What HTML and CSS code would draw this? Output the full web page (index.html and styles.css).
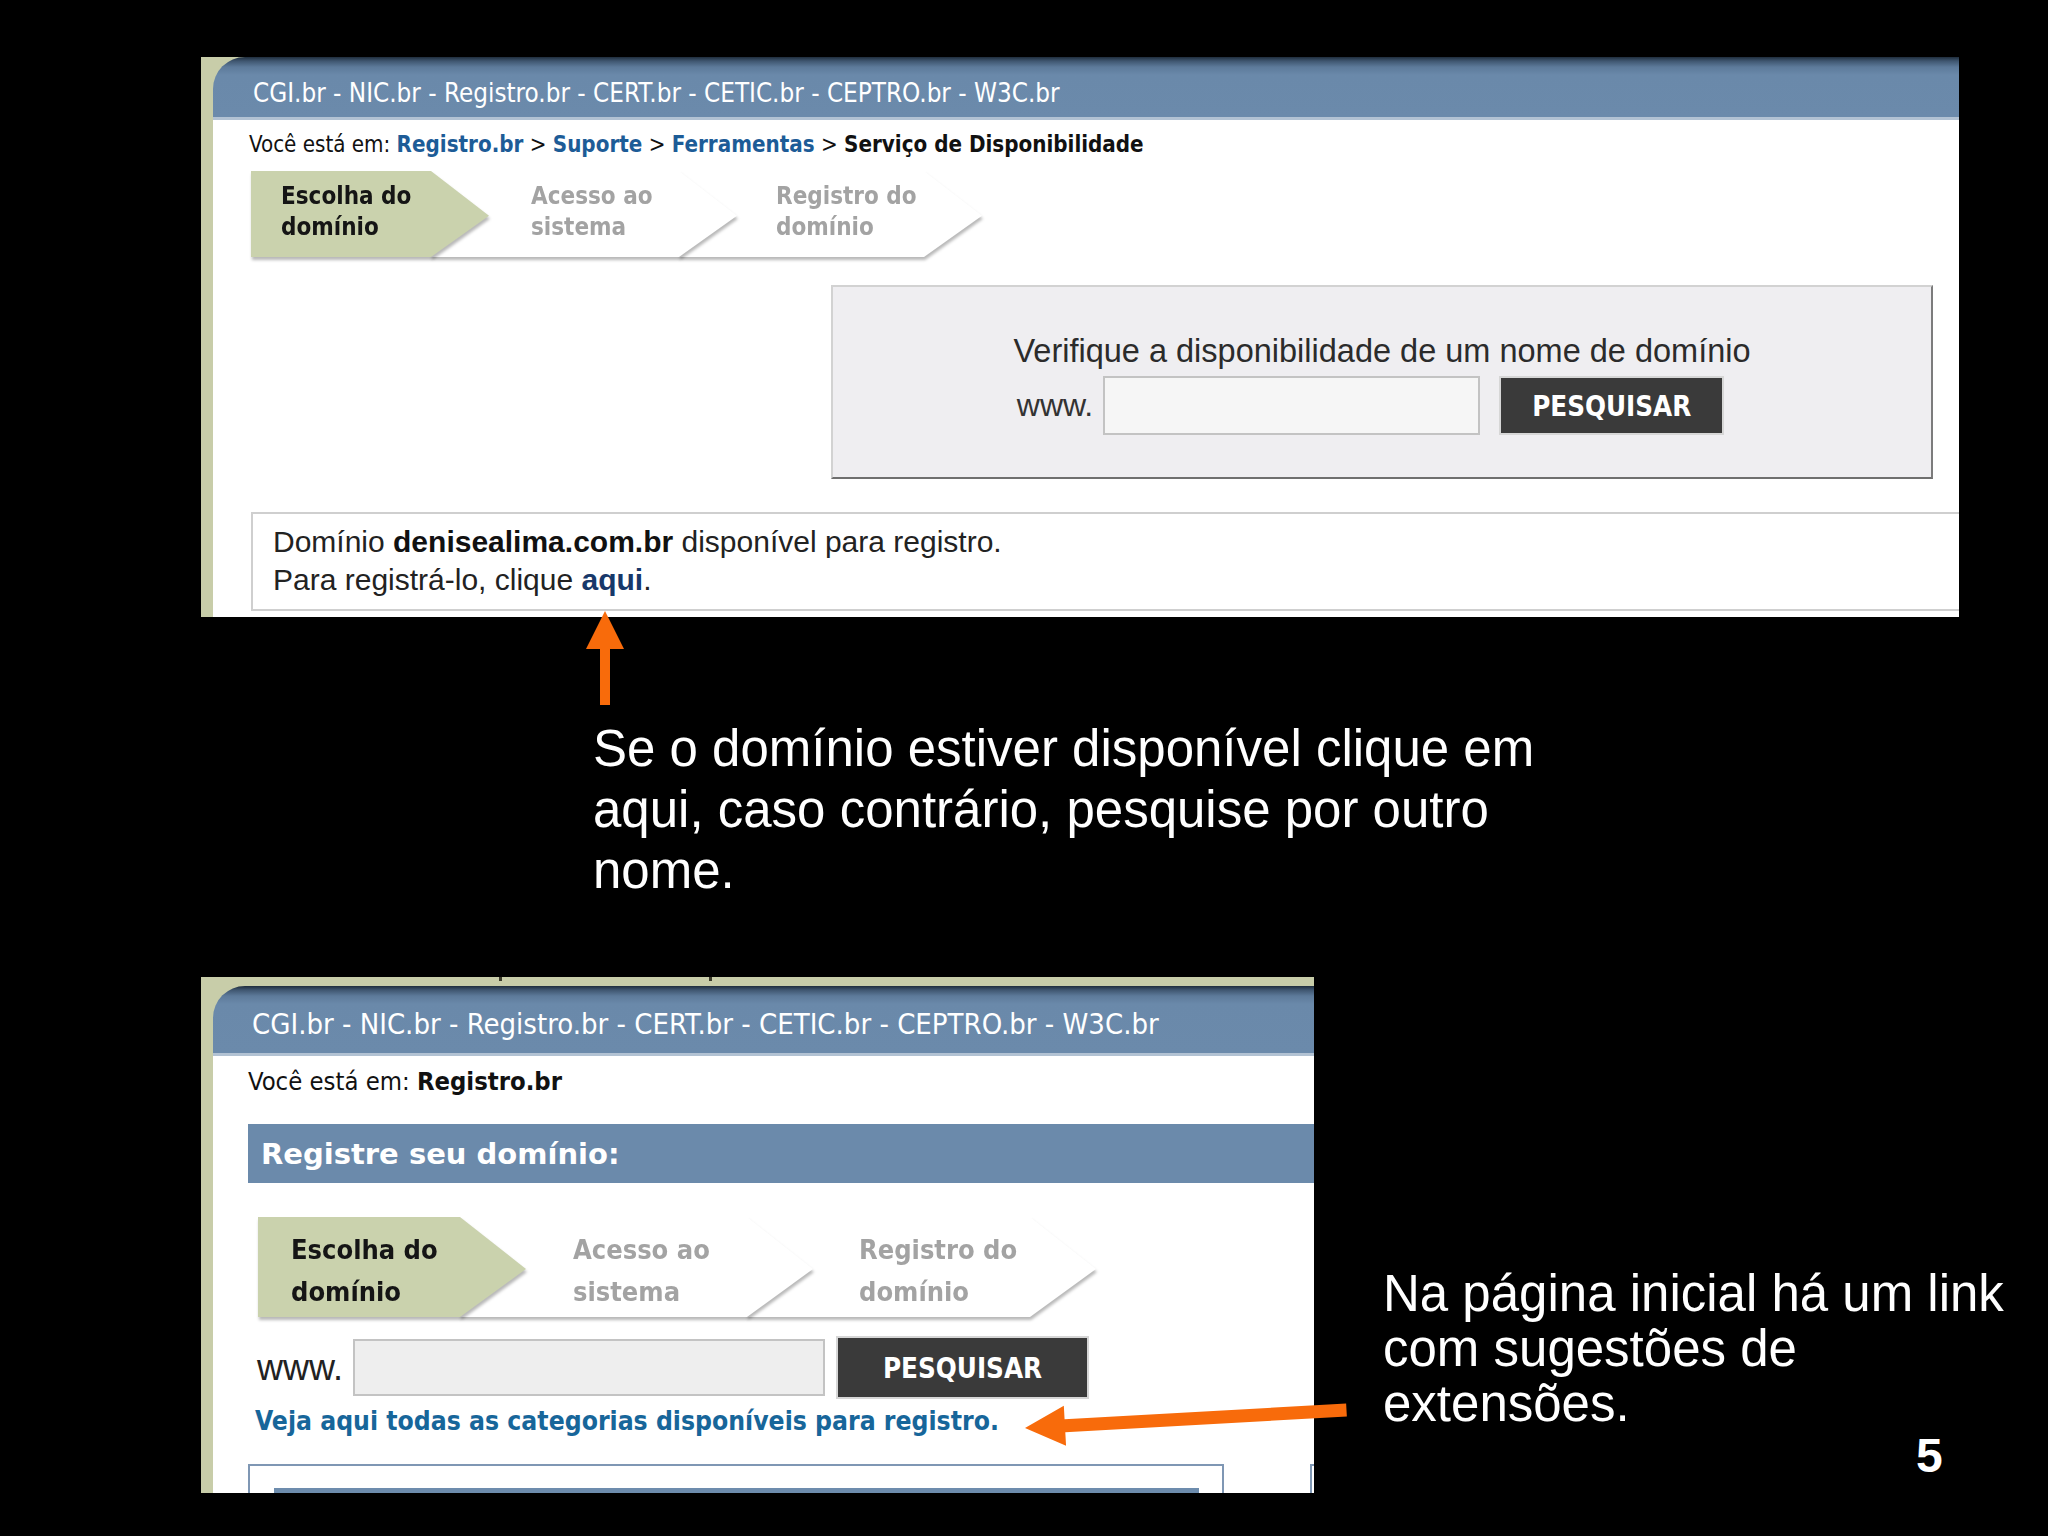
FILE: index.html
```html
<!DOCTYPE html>
<html lang="pt-BR">
<head>
<meta charset="utf-8">
<title>Registro.br - Serviço de Disponibilidade</title>
<link rel="stylesheet" href="styles.css">
</head>
<body>
<div class="slide">

  <div class="shot shot-top">
    <div class="main">
      <div class="topbar">CGI.br - NIC.br - Registro.br - CERT.br - CETIC.br - CEPTRO.br - W3C.br</div>
      <div class="page">
        <div class="crumbs">Você está em: <a class="crumb-link">Registro.br</a> &gt; <a class="crumb-link">Suporte</a> &gt; <a class="crumb-link">Ferramentas</a> &gt; <b class="crumb-here">Serviço de Disponibilidade</b></div>
        <div class="steps">
          <div class="step step-1 on"><div class="step-shape">Escolha do<br>domínio</div></div>
          <div class="step step-2"><div class="step-shape">Acesso ao<br>sistema</div></div>
          <div class="step step-3"><div class="step-shape">Registro do<br>domínio</div></div>
        </div>
        <div class="check">
          <div class="check-title">Verifique a disponibilidade de um nome de domínio</div>
          <div class="check-row">
            <span class="www">www.</span>
            <div class="input"></div>
            <div class="btn">PESQUISAR</div>
          </div>
        </div>
        <div class="result">
          Domínio <b class="strong">denisealima.com.br</b> disponível para registro.<br>
          Para registrá-lo, clique <a class="aqui">aqui</a>.
        </div>
      </div>
    </div>
  </div>

  <svg class="arrow arrow-up" width="40" height="96" viewBox="0 0 40 96" aria-hidden="true">
    <polygon points="20,2 39,40 25,40 25,96 15,96 15,40 1,40" fill="#f86b0b"/>
  </svg>

  <div class="caption cap1">Se o domínio estiver disponível clique em<br>aqui, caso contrário, pesquise por outro<br>nome.</div>

  <div class="shot shot-bottom">
    <div class="ticks"><span class="tick"></span><span class="tick"></span></div>
    <div class="main">
      <div class="topbar">CGI.br - NIC.br - Registro.br - CERT.br - CETIC.br - CEPTRO.br - W3C.br</div>
      <div class="page">
        <div class="crumbs">Você está em: <b class="crumb-here">Registro.br</b></div>
        <div class="regbar">Registre seu domínio:</div>
        <div class="steps">
          <div class="step step-1 on"><div class="step-shape">Escolha do<br>domínio</div></div>
          <div class="step step-2"><div class="step-shape">Acesso ao<br>sistema</div></div>
          <div class="step step-3"><div class="step-shape">Registro do<br>domínio</div></div>
        </div>
        <div class="search">
          <span class="www">www.</span>
          <div class="input"></div>
          <div class="btn">PESQUISAR</div>
        </div>
        <a class="cat-link">Veja aqui todas as categorias disponíveis para registro.</a>
        <div class="boxes">
          <div class="box1"><div class="box1-bar"></div></div>
          <div class="box2"></div>
        </div>
      </div>
    </div>
  </div>

  <svg class="arrow arrow-left" width="340" height="60" viewBox="0 0 340 60" aria-hidden="true">
    <g transform="translate(5,38) rotate(-3.2)">
      <polygon points="0,0 40,-20 40,-6.5 322,-6.5 322,6.5 40,6.5 40,20" fill="#f86b0b"/>
    </g>
  </svg>

  <div class="caption cap2">Na página inicial há um link<br>com sugestões de<br>extensões.</div>

  <div class="pagenum">5</div>
</div>
</body>
</html>
```

FILE: styles.css
```css
* { box-sizing: border-box; }

html, body {
  margin: 0;
  padding: 0;
  background: #000;
}

body {
  font-family: "Liberation Sans", Arial, sans-serif;
}

.slide {
  position: relative;
  width: 2048px;
  height: 1536px;
  overflow: hidden;
  background: #000;
}

/* ---------- screenshot panels ---------- */
.shot {
  position: absolute;
  display: flex;
  background: #c8cda9;
  padding-left: 12px;
  overflow: hidden;
  font-family: "Liberation Sans Narrow", "Arial Narrow", "DejaVu Sans Condensed", "Nimbus Sans Narrow", sans-serif;
}

.shot-top {
  left: 201px;
  top: 57px;
  width: 1758px;
  height: 560px;
}

.shot-bottom {
  left: 201px;
  top: 977px;
  width: 1113px;
  height: 516px;
  padding-top: 9px;
}

/* tiny marks on the cropped top edge of the lower screenshot */
.ticks {
  position: absolute;
  left: 0;
  top: 0;
  width: 100%;
  height: 9px;
}

.tick {
  position: absolute;
  top: 0;
  width: 3px;
  height: 4px;
  background: #3a3a2a;
}

.tick:nth-child(1) { left: 298px; }
.tick:nth-child(2) { left: 508px; }

.main {
  flex: 1;
  min-width: 0;
  display: flex;
  flex-direction: column;
}

.topbar {
  flex: none;
  display: flex;
  align-items: center;
  white-space: nowrap;
  color: #fff;
  border-top-left-radius: 32px;
  border-bottom: 3px solid #b2c2d3;
  background: linear-gradient(to bottom, #1f2d3c 0, #3f5670 4px, #5d7a9a 10px, #6a89aa 18px, #6b8aab 100%);
}

.shot-top .topbar {
  height: 63px;
  padding: 12px 0 0 40px;
  font-size: 25.8px;
}

.shot-bottom .topbar {
  height: 70px;
  padding: 9px 0 0 39px;
  font-size: 29px;
}

.page {
  flex: 1;
  min-height: 0;
  background: #fff;
  display: flex;
  flex-direction: column;
  align-items: flex-start;
  overflow: hidden;
}

.shot-top .page { padding-left: 36px; }
.shot-bottom .page { padding-left: 35px; }

/* breadcrumb */
.crumbs {
  margin-top: 10px;
  color: #111;
  white-space: nowrap;
}

.shot-top .crumbs { font-size: 22.2px; line-height: 28px; }
.shot-bottom .crumbs { font-size: 25.4px; line-height: 31px; }

.crumb-link {
  color: #1d5c97;
  font-weight: bold;
}

.crumb-here {
  color: #111;
  font-weight: bold;
}

/* steps */
.steps {
  display: flex;
  flex: none;
}

.shot-top .steps {
  --tip: 58px;
  margin-top: 13px;
  margin-left: 2px;
  height: 86px;
  font-size: 24px;
  line-height: 31px;
}

.shot-bottom .steps {
  --tip: 66px;
  margin-top: 34px;
  margin-left: 10px;
  height: 100px;
  font-size: 27px;
  line-height: 42px;
}

.step {
  flex: none;
  height: 100%;
  filter: drop-shadow(1px 3px 1.5px rgba(0, 0, 0, 0.28));
}

.step + .step { margin-left: calc(-1 * var(--tip)); }

.step-1 { z-index: 3; }
.step-2 { z-index: 2; }
.step-3 { z-index: 1; }

.step-shape {
  height: 100%;
  background: #fff;
  color: #a3a3a3;
  font-weight: bold;
  white-space: nowrap;
  clip-path: polygon(0 0, calc(100% - var(--tip)) 0, 100% 52%, calc(100% - var(--tip)) 100%, 0 100%);
}

.step.on .step-shape {
  background: #cad2ad;
  color: #151515;
}

.shot-top .step-shape { padding-top: 10px; }
.shot-top .step-1 { width: 238px; }
.shot-top .step-1 .step-shape { padding-left: 30px; }
.shot-top .step-2 { width: 306px; }
.shot-top .step-2 .step-shape { padding-left: 100px; }
.shot-top .step-3 { width: 303px; }
.shot-top .step-3 .step-shape { padding-left: 97px; }

.shot-bottom .step-shape { padding-top: 12px; }
.shot-bottom .step-1 { width: 268px; }
.shot-bottom .step-1 .step-shape { padding-left: 33px; }
.shot-bottom .step-2 { width: 353px; }
.shot-bottom .step-2 .step-shape { padding-left: 113px; }
.shot-bottom .step-3 { width: 349px; }
.shot-bottom .step-3 .step-shape { padding-left: 112px; }

/* availability check box (top) */
.check {
  align-self: flex-end;
  margin-top: 28px;
  margin-right: 26px;
  width: 1102px;
  height: 194px;
  flex: none;
  background: #efeef1;
  border-top: 2px solid #d2d2d2;
  border-left: 2px solid #d2d2d2;
  border-right: 2px solid #7c7c7c;
  border-bottom: 2px solid #6f6f6f;
  padding-top: 46px;
  display: flex;
  flex-direction: column;
  align-items: center;
}

.check-title {
  font-family: "Liberation Sans", Arial, sans-serif;
  font-size: 32.5px;
  line-height: 36px;
  color: #2b2b2b;
  white-space: nowrap;
}

.check-row {
  margin-top: 7px;
  display: flex;
  align-items: center;
  padding-right: 23px;
}

.www {
  font-family: "Liberation Sans", Arial, sans-serif;
  color: #333;
  white-space: nowrap;
}

.check-row .www { font-size: 32px; margin-right: 10px; }

.input {
  flex: none;
  background: #f6f6f6;
  border: 2px solid #c3c3c3;
}

.check-row .input { width: 377px; height: 59px; }

.btn {
  flex: none;
  display: flex;
  align-items: center;
  justify-content: center;
  background: #3a3a3a;
  border: 2px solid #d6d6d6;
  color: #fff;
  font-weight: bold;
  font-size: 27.5px;
}

.check-row .btn { margin-left: 19px; width: 225px; height: 59px; }

/* result */
.result {
  margin-top: 33px;
  margin-left: 2px;
  align-self: stretch;
  height: 99px;
  flex: none;
  border: 2px solid #cfcfcf;
  border-right: none;
  padding: 9px 0 0 20px;
  font-family: "Liberation Sans", Arial, sans-serif;
  font-size: 30px;
  line-height: 38px;
  color: #222;
  white-space: nowrap;
}

.strong { color: #111; }

.aqui {
  color: #17386a;
  font-weight: bold;
}

/* bottom panel pieces */
.regbar {
  margin-top: 27px;
  align-self: stretch;
  flex: none;
  height: 59px;
  background: #6b8aab;
  color: #fff;
  font-family: "DejaVu Sans", Verdana, sans-serif;
  font-weight: bold;
  font-size: 29px;
  padding-left: 13px;
  display: flex;
  align-items: center;
  white-space: nowrap;
}

.search {
  margin-top: 19px;
  margin-left: 9px;
  display: flex;
  align-items: center;
  flex: none;
}

.search .www { font-size: 36px; margin-right: 10px; color: #222; }
.search .input { width: 472px; height: 57px; background: #eeeeee; }
.search .btn { margin-left: 11px; width: 253px; height: 63px; font-size: 27.5px; }

.cat-link {
  margin-top: 5px;
  margin-left: 7px;
  font-size: 26.3px;
  line-height: 34px;
  color: #17669a;
  font-weight: bold;
  white-space: nowrap;
}

.boxes {
  margin-top: 26px;
  align-self: stretch;
  display: flex;
  height: 40px;
  flex: none;
}

.box1 {
  width: 976px;
  flex: none;
  border: 2px solid #7f97b4;
  padding: 22px 23px 0 24px;
}

.box1-bar {
  height: 10px;
  background: #6d8cad;
}

.box2 {
  flex: 1;
  margin-left: 86px;
  border-top: 2px solid #7f97b4;
  border-left: 2px solid #7f97b4;
}

/* slide annotations */
.arrow { position: absolute; }

.arrow-up { left: 585px; top: 609px; }
.arrow-left { left: 1020px; top: 1390px; }

.caption {
  position: absolute;
  color: #fff;
  font-family: "Liberation Sans", Arial, sans-serif;
  font-size: 51px;
  white-space: nowrap;
}

.cap1 { left: 593px; top: 718px; line-height: 61px; }
.cap2 { left: 1383px; top: 1266px; line-height: 55px; }

.pagenum {
  position: absolute;
  left: 1916px;
  top: 1428px;
  color: #fff;
  font-family: "Liberation Sans", Arial, sans-serif;
  font-weight: bold;
  font-size: 48px;
  line-height: 56px;
}
```
